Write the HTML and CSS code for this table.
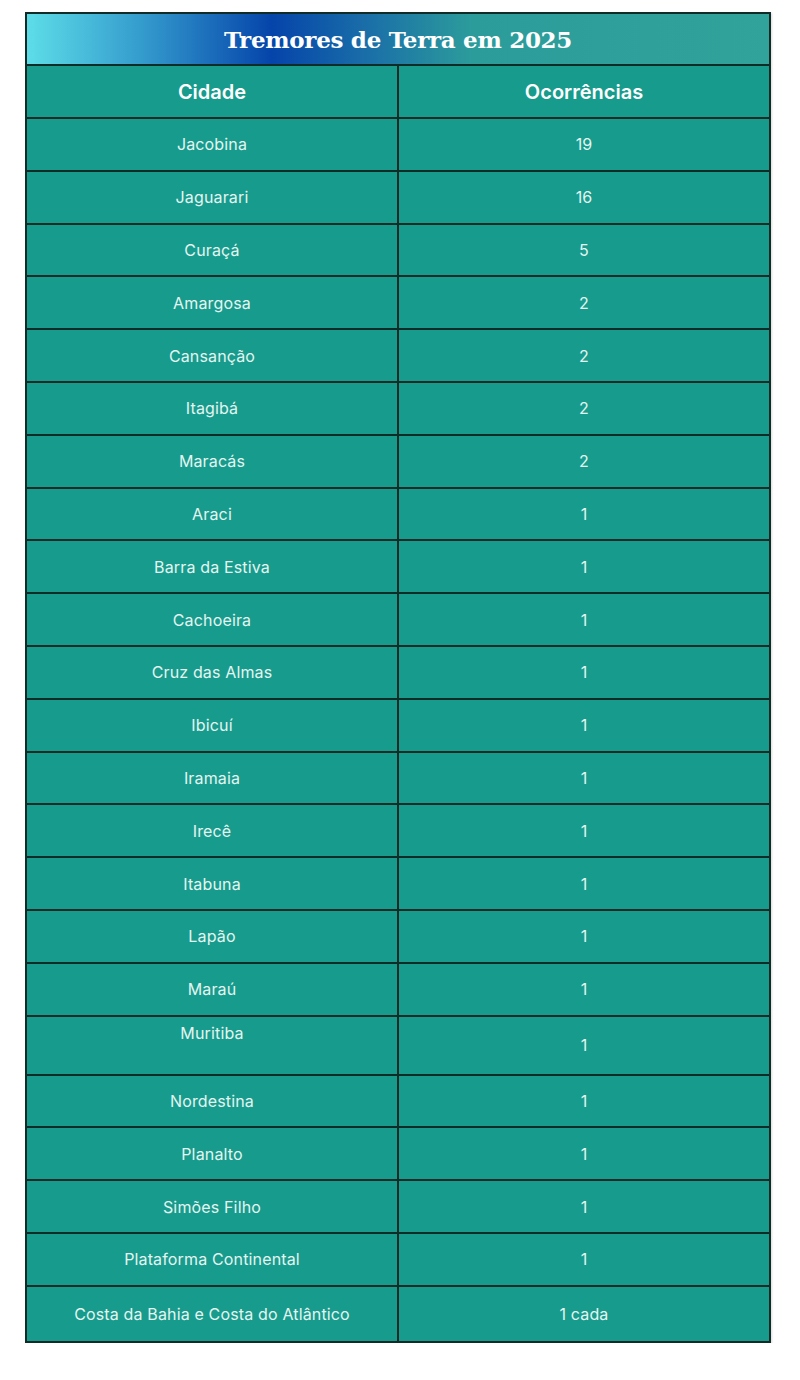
FILE: index.html
```html
<!DOCTYPE html>
<html lang="pt">
<head>
<meta charset="utf-8">
<title>Tremores de Terra em 2025</title>
<link rel="stylesheet" href="styles.css">
</head>
<body>
<div class="page">
<table class="quakes">
  <thead>
    <tr class="title-row"><th colspan="2" class="title">Tremores de Terra em 2025</th></tr>
    <tr class="head-row"><th>Cidade</th><th>Ocorrências</th></tr>
  </thead>
  <tbody>
    <tr><td>Jacobina</td><td>19</td></tr>
    <tr><td>Jaguarari</td><td>16</td></tr>
    <tr><td>Curaçá</td><td>5</td></tr>
    <tr><td>Amargosa</td><td>2</td></tr>
    <tr><td>Cansanção</td><td>2</td></tr>
    <tr><td>Itagibá</td><td>2</td></tr>
    <tr><td>Maracás</td><td>2</td></tr>
    <tr><td>Araci</td><td>1</td></tr>
    <tr><td>Barra da Estiva</td><td>1</td></tr>
    <tr><td>Cachoeira</td><td>1</td></tr>
    <tr><td>Cruz das Almas</td><td>1</td></tr>
    <tr><td>Ibicuí</td><td>1</td></tr>
    <tr><td>Iramaia</td><td>1</td></tr>
    <tr><td>Irecê</td><td>1</td></tr>
    <tr><td>Itabuna</td><td>1</td></tr>
    <tr><td>Lapão</td><td>1</td></tr>
    <tr><td>Maraú</td><td>1</td></tr>
    <tr class="tall"><td class="top">Muritiba</td><td>1</td></tr>
    <tr><td>Nordestina</td><td>1</td></tr>
    <tr><td>Planalto</td><td>1</td></tr>
    <tr><td>Simões Filho</td><td>1</td></tr>
    <tr><td>Plataforma Continental</td><td>1</td></tr>
    <tr class="last"><td>Costa da Bahia e Costa do Atlântico</td><td>1 cada</td></tr>
  </tbody>
</table>
</div>
</body>
</html>
```

FILE: styles.css
```css
html, body {
  margin: 0;
  padding: 0;
  background: #ffffff;
}

.page {
  padding: 12px 0 0 25px;
}

.quakes {
  width: 746px;
  border-collapse: collapse;
  table-layout: fixed;
  border: 2px solid #2e3836;
  background: #179b8c;
  font-family: Inter, "Noto Sans", sans-serif;
  color: #e4f5f1;
  box-shadow: 1px 1px 2px rgba(0, 0, 0, 0.15);
}

.quakes th,
.quakes td {
  border: 2px solid #112b27;
  text-align: center;
  vertical-align: middle;
  padding: 0 6px;
}

.title-row {
  height: 52px;
}

.title {
  background: linear-gradient(90deg, #5ddde8 0%, #3399cc 16%, #0544aa 33%, #1a6fa8 46%, #2c9c9b 60%, #31a39a 100%);
  font-family: "DejaVu Serif", "Liberation Serif", serif;
  font-weight: 700;
  font-size: 23px;
  color: #ffffff;
  letter-spacing: -0.3px;
}

.head-row {
  height: 53px;
}

.head-row th {
  font-family: Inter, "Noto Sans", sans-serif;
  font-weight: 600;
  font-size: 20px;
  color: #ffffff;
}

.quakes tbody tr {
  height: 52.8px;
}

.quakes tbody td {
  font-size: 16px;
  font-weight: 400;
  letter-spacing: 0.15px;
}

.quakes tbody tr.tall {
  height: 59px;
}

.quakes tbody td.top {
  vertical-align: top;
  padding-top: 6px;
}

.quakes tbody tr.last {
  height: 56px;
}
```
